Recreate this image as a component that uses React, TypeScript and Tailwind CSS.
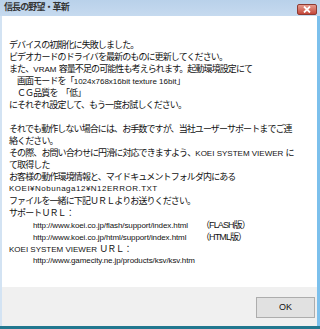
import React from 'react';

// japanese runs are set a size up and squeezed, latin text stays at the base 8px
const J = ({ children }: { children: React.ReactNode }) => (
  <span className="text-[9px] tracking-[-0.9px]">{children}</span>
);

function UrlRow({ url, note }: { url: string; note?: string }) {
  return (
    <div className="flex h-[12px] items-baseline pl-[24px] leading-[12px]">
      <span className="w-[168px] shrink-0 tracking-[-0.1px]">{url}</span>
      {note && <J>{note}</J>}
    </div>
  );
}

function Row({ children, indent }: { children?: React.ReactNode; indent?: boolean }) {
  return (
    <div className={`h-[12px] whitespace-pre leading-[12px] ${indent ? 'pl-[8px]' : ''}`}>
      {children}
    </div>
  );
}

export default function App() {
  return (
    <div className="flex h-[329px] w-[320px] flex-col overflow-hidden bg-[#c4d9ee] font-['Liberation_Sans','Noto_Sans_CJK_JP',sans-serif] text-[8px] text-[#111]">
      {/* title bar */}
      <div className="flex h-[16px] shrink-0 items-center justify-between bg-gradient-to-b from-[#b9d1ea] to-[#c6daef] pl-[4px] pr-[3px]">
        <span className="text-[9px] font-bold tracking-[-0.9px] text-[#333]">信長の野望・革新</span>
        <button className="mt-[2px] flex h-[11px] w-[20px] items-center justify-center rounded-[2px] border border-[#8e3b32] bg-gradient-to-b from-[#e59a8e] to-[#c4463a]">
          <svg width="8" height="7" viewBox="0 0 8 7">
            <path d="M1 0.5 L7 6.5 M7 0.5 L1 6.5" stroke="#fff" strokeWidth="1.8" />
          </svg>
        </button>
      </div>

      <div className="flex min-h-0 flex-1 flex-col border-l-2 border-r-[3px] border-l-[#d3e3f3] border-r-[#7cc0ec]">
        <div className="flex flex-1 flex-col bg-white pl-[7px] pt-[23px]">
          <Row><J>デバイスの初期化に失敗しました。</J></Row>
          <Row><J>ビデオカードのドライバを最新のものに更新してください。</J></Row>
          <Row><J>また、</J>VRAM <J>容量不足の可能性も考えられます。起動環境設定にて</J></Row>
          <Row indent><J>画面モードを「</J>1024x768x16bit texture 16bit<J>」</J></Row>
          <Row indent><J>ＣＧ品質を　「低」</J></Row>
          <Row><J>にそれぞれ設定して、もう一度お試しください。</J></Row>
          <Row />
          <Row><J>それでも動作しない場合には、お手数ですが、当社ユーザーサポートまでご連</J></Row>
          <Row><J>絡ください。</J></Row>
          <Row><J>その際、お問い合わせに円滑に対応できますよう、</J>KOEI SYSTEM VIEWER <J>に</J></Row>
          <Row><J>て取得した</J></Row>
          <Row><J>お客様の動作環境情報と、マイドキュメントフォルダ内にある</J></Row>
          <Row><span className="tracking-[0.5px]">KOEI¥Nobunaga12¥N12ERROR.TXT</span></Row>
          <Row><J>ファイルを一緒に下記ＵＲＬよりお送りください。</J></Row>
          <Row><J>サポートＵＲＬ：</J></Row>
          <UrlRow url="http://www.koei.co.jp/flash/support/index.html" note="（FLASH版）" />
          <UrlRow url="http://www.koei.co.jp/html/support/index.html" note="（HTML版）" />
          <Row>KOEI SYSTEM VIEWER <J>ＵＲＬ：</J></Row>
          <UrlRow url="http://www.gamecity.ne.jp/products/ksv/ksv.htm" />
        </div>

        <div className="flex h-[39px] shrink-0 items-start justify-end bg-[#f0f0f0] pr-[2px] pt-[10px]">
          <button className="flex h-[21px] w-[59px] items-center justify-center border border-[#adadad] bg-[#e1e1e1] text-[9px] text-[#111]">
            OK
          </button>
        </div>
      </div>

      <div className="h-[3px] shrink-0 bg-[#22778f]" />
    </div>
  );
}
